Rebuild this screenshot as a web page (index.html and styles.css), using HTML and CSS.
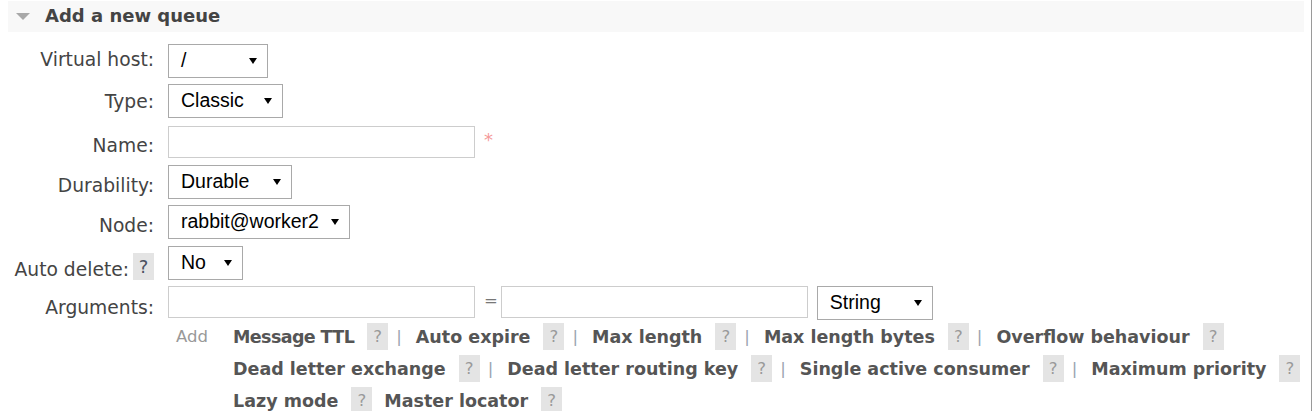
FILE: index.html
```html
<!DOCTYPE html>
<html>
<head>
<meta charset="utf-8">
<link rel="stylesheet" href="styles.css">
</head>
<body>
<div class="page">
  <div class="section">
    <h2 class="section-title"><svg class="toggle" width="14" height="7" viewBox="0 0 14 7"><path d="M0 0H14L7 7Z" fill="#a8a8a8"/></svg><span>Add a new queue</span></h2>
    <div class="form">
      <div class="label label-up">Virtual host:</div>
      <div class="field"><div class="select w-vhost"><span class="value">/</span><svg class="arrow" width="8" height="6" viewBox="0 0 8 6"><path d="M0 0H8L4 6Z"/></svg></div></div>

      <div class="label label-mid">Type:</div>
      <div class="field"><div class="select w-type"><span class="value">Classic</span><svg class="arrow" width="8" height="6" viewBox="0 0 8 6"><path d="M0 0H8L4 6Z"/></svg></div></div>

      <div class="label">Name:</div>
      <div class="field"><input class="input" type="text"><span class="required">*</span></div>

      <div class="label">Durability:</div>
      <div class="field"><div class="select w-dur"><span class="value">Durable</span><svg class="arrow" width="8" height="6" viewBox="0 0 8 6"><path d="M0 0H8L4 6Z"/></svg></div></div>

      <div class="label">Node:</div>
      <div class="field"><div class="select w-node"><span class="value">rabbit@worker2</span><svg class="arrow" width="8" height="6" viewBox="0 0 8 6"><path d="M0 0H8L4 6Z"/></svg></div></div>

      <div class="label label-help">Auto delete: <span class="help help-dark">?</span></div>
      <div class="field"><div class="select w-auto"><span class="value">No</span><svg class="arrow" width="8" height="6" viewBox="0 0 8 6"><path d="M0 0H8L4 6Z"/></svg></div></div>

      <div class="label label-args">Arguments:</div>
      <div class="field field-args">
        <div class="args-row">
          <input class="input" type="text"><span class="equals">=</span><input class="input" type="text">
          <div class="select w-string"><span class="value">String</span><svg class="arrow" width="8" height="6" viewBox="0 0 8 6"><path d="M0 0H8L4 6Z"/></svg></div>
        </div>
        <div class="links">
          <div class="add">Add</div>
          <div class="link-lines">
            <div class="line">
              <span class="arg-link tight">Message TTL</span><span class="help">?</span><span class="pipe">|</span>
              <span class="arg-link">Auto expire</span><span class="help">?</span><span class="pipe">|</span>
              <span class="arg-link">Max length</span><span class="help">?</span><span class="pipe">|</span>
              <span class="arg-link">Max length bytes</span><span class="help">?</span><span class="pipe">|</span>
              <span class="arg-link">Overflow behaviour</span><span class="help">?</span>
            </div>
            <div class="line">
              <span class="arg-link">Dead letter exchange</span><span class="help">?</span><span class="pipe">|</span>
              <span class="arg-link">Dead letter routing key</span><span class="help">?</span><span class="pipe">|</span>
              <span class="arg-link">Single active consumer</span><span class="help">?</span><span class="pipe">|</span>
              <span class="arg-link">Maximum priority</span><span class="help">?</span>
            </div>
            <div class="line">
              <span class="arg-link">Lazy mode</span><span class="help">?</span>
              <span class="arg-link next">Master locator</span><span class="help">?</span>
            </div>
          </div>
        </div>
      </div>
    </div>
  </div>
</div>
</body>
</html>
```

FILE: styles.css
```css
html, body {
  margin: 0;
  padding: 0;
  background: #fff;
}

.page {
  width: 1312px;
  height: 411px;
  border-right: 1px solid #9a9a9a;
  padding-top: 1px;
  box-sizing: border-box;
  font-family: "DejaVu Sans", Verdana, sans-serif;
  color: #444;
  overflow: hidden;
}

.section-title {
  margin: 0 7px 0 8px;
  height: 31px;
  background: #f8f8f8;
  display: flex;
  align-items: center;
  padding: 0 0 2px 8px;
  box-sizing: border-box;
  font-size: 18px;
  font-weight: bold;
  color: #444;
}

.toggle {
  margin-right: 15px;
  margin-top: 1px;
}

.form {
  margin-top: 12px;
  display: grid;
  grid-template-columns: 154px 1fr;
  grid-auto-rows: minmax(34px, auto);
  column-gap: 14px;
  row-gap: 6.33px;
  align-items: center;
}

.label {
  text-align: right;
  font-size: 18.7px;
  color: #444;
  white-space: nowrap;
  padding-top: 7px;
}

.label-mid {
  padding-top: 0;
}

.label-up {
  padding-top: 0;
  padding-bottom: 4px;
}

.label-help {
  display: flex;
  justify-content: flex-end;
  align-items: flex-end;
  align-self: stretch;
  padding-top: 0;
}

.label-help .help {
  margin-left: 4px;
}

.label-args {
  align-self: start;
  padding-top: 11px;
}

.field {
  display: flex;
  align-items: center;
}

.select {
  display: inline-flex;
  align-items: center;
  height: 34px;
  box-sizing: border-box;
  border: 1px solid #a9a9a9;
  padding: 0 10px 1px 12px;
  font-family: "Liberation Sans", Arial, sans-serif;
  font-size: 19.5px;
  color: #000;
  background: #fff;
}

.select .value {
  flex: 1;
  white-space: nowrap;
}

.arrow {
  flex: none;
  margin-top: 1px;
}

.w-vhost { width: 100px; }
.w-type { width: 115px; }
.w-dur { width: 124px; }
.w-node { width: 182px; }
.w-auto { width: 75px; }
.w-string { width: 116px; margin-left: 9px; }

.input {
  width: 307px;
  height: 32px;
  box-sizing: border-box;
  border: 1px solid #cdcdcd;
  margin: 0;
  padding: 0;
  background: #fff;
}

.required {
  align-self: flex-start;
  margin-left: 9px;
  margin-top: 5px;
  color: #f59a9a;
  font-size: 18px;
  line-height: 18px;
}

.field-args {
  flex-direction: column;
  align-items: stretch;
}

.args-row {
  display: flex;
  align-items: flex-start;
}

.equals {
  font-size: 16.5px;
  color: #777;
  margin: 5px 3px 0 9px;
  line-height: 20px;
}

.links {
  display: flex;
  margin-top: 1px;
}

.add {
  width: 65px;
  box-sizing: border-box;
  padding-left: 8px;
  color: #999;
  font-size: 16.5px;
  height: 32px;
  display: flex;
  align-items: center;
}

.link-lines {
  display: flex;
  flex-direction: column;
}

.line {
  display: flex;
  align-items: center;
  height: 32px;
  white-space: nowrap;
}

.arg-link {
  font-size: 17.5px;
  font-weight: bold;
  color: #555;
}

.arg-link.tight {
  letter-spacing: -0.6px;
}

.arg-link.next {
  margin-left: 12px;
}

.help {
  display: inline-flex;
  align-items: center;
  justify-content: center;
  width: 21px;
  height: 27px;
  background: #e4e4e4;
  color: #999;
  font-size: 16.5px;
  font-weight: normal;
  margin-left: 13px;
  flex: none;
}

.help-dark {
  color: #4a5060;
  font-size: 18px;
}

.pipe {
  font-size: 16.5px;
  color: #9aa4b0;
  margin: 0 14px 0 8px;
}
```
